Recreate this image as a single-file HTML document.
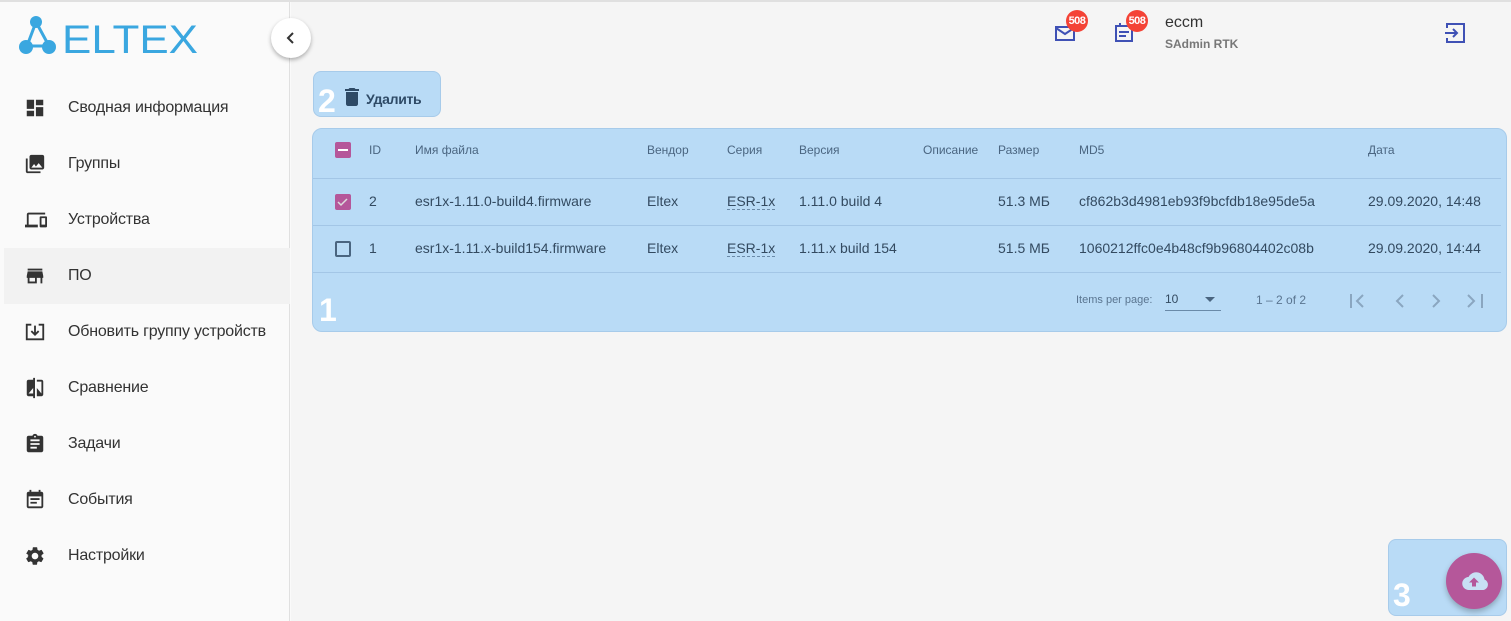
<!DOCTYPE html>
<html><head><meta charset="utf-8"><style>
*{box-sizing:border-box;margin:0;padding:0}
body{width:1511px;height:621px;overflow:hidden;background:#fafafa;font-family:"Liberation Sans",sans-serif;position:relative;color:#333}
.top{position:absolute;left:0;top:0;width:1511px;height:2px;background:#e0e0e0}
.side{position:absolute;left:0;top:2px;width:290px;height:619px;background:#fafafa;border-right:1px solid #e0e0e0}
.main{position:absolute;left:291px;top:2px;width:1220px;height:619px;background:#f5f5f5}
.nav{position:absolute;left:4px;width:286px;height:56px;display:flex;align-items:center;font-size:16px;color:#333}
.nav svg{position:absolute;left:20px}
.nav span{position:absolute;left:64px;letter-spacing:-0.2px}
.abs{position:absolute}
.th{position:absolute;top:143px;font-size:12px;color:#4a6580}
.td{position:absolute;font-size:14px;color:#334a60}
.line{position:absolute;left:313px;width:1188px;height:1px;background:#a3c6e6}
.big{position:absolute;color:#fff;font-weight:bold;font-size:32px}
</style></head><body>
<div class="top"></div>
<div class="side">
<svg class="abs" style="left:18px;top:12px" width="182" height="44" viewBox="0 0 182 44">
<g stroke="#3aa7e0" stroke-width="3"><line x1="18" y1="8" x2="9" y2="32"/><line x1="18" y1="8" x2="31" y2="32"/><line x1="9" y1="32" x2="31" y2="32"/></g>
<g fill="#3aa7e0"><circle cx="18" cy="8" r="6"/><circle cx="8" cy="33" r="7"/><circle cx="31" cy="33" r="7"/></g>
<text x="44" y="39" font-family="Liberation Sans" font-size="40" fill="#3aa7e0" letter-spacing="0" textLength="136" lengthAdjust="spacingAndGlyphs">ELTEX</text>
</svg>
<div class="nav" style="top:78px"><svg width="22" height="22" viewBox="0 0 24 24"><path fill="#333" d="M3 13h8V3H3zm0 8h8v-6H3zm10 0h8V11h-8zm0-18v6h8V3z"/></svg><span>Сводная информация</span></div>
<div class="nav" style="top:134px"><svg width="22" height="22" viewBox="0 0 24 24"><path fill="#333" d="M22 16V4c0-1.1-.9-2-2-2H8c-1.1 0-2 .9-2 2v12c0 1.1.9 2 2 2h12c1.1 0 2-.9 2-2zm-11-4 2 2.7L16 11l4 5H8zM2 6v14c0 1.1.9 2 2 2h14v-2H4V6z"/></svg><span>Группы</span></div>
<div class="nav" style="top:190px"><svg width="24" height="22" viewBox="0 0 24 24"><path fill="#333" d="M4 6h18V4H4c-1.1 0-2 .9-2 2v11H0v3h14v-3H4zm19 2h-6c-.55 0-1 .45-1 1v10c0 .55.45 1 1 1h6c.55 0 1-.45 1-1V9c0-.55-.45-1-1-1zm-1 9h-4v-7h4z"/></svg><span>Устройства</span></div>
<div class="nav" style="top:246px;background:#f2f2f2"><svg width="22" height="22" viewBox="0 0 24 24"><path fill="#333" d="M20 4H4v2h16zm1 10v-2l-1-5H4l-1 5v2h1v6h10v-6h4v6h2v-6zm-9 4H6v-4h6z"/></svg><span>ПО</span></div>
<div class="nav" style="top:302px"><svg width="22" height="22" viewBox="0 0 24 24"><path fill="none" stroke="#333" stroke-width="2" d="M8 4H3v16h18V4h-5M12 5v10M8 11l4 4 4-4"/></svg><span>Обновить группу устройств</span></div>
<div class="nav" style="top:358px"><svg width="22" height="22" viewBox="0 0 24 24"><path fill="#333" d="M10 3H5c-1.1 0-2 .9-2 2v14c0 1.1.9 2 2 2h5v2h2V1h-2zm0 15H5l5-6zm9-15h-5v2h5v13l-5-6v9h5c1.1 0 2-.9 2-2V5c0-1.1-.9-2-2-2z"/></svg><span>Сравнение</span></div>
<div class="nav" style="top:414px"><svg width="22" height="22" viewBox="0 0 24 24"><path fill="#333" d="M19 3h-4.2C14.4 1.8 13.300 1 12 1s-2.4.8-2.8 2H5c-1.1 0-2 .9-2 2v14c0 1.1.9 2 2 2h14c1.1 0 2-.9 2-2V5c0-1.1-.9-2-2-2zm-7 0c.55 0 1 .45 1 1s-.45 1-1 1-1-.45-1-1 .45-1 1-1zm2 14H7v-2h7zm3-4H7v-2h10zm0-4H7V7h10z"/></svg><span>Задачи</span></div>
<div class="nav" style="top:470px"><svg width="22" height="22" viewBox="0 0 24 24"><path fill="#333" d="M19 3h-1V1h-2v2H8V1H6v2H5c-1.1 0-2 .9-2 2v14c0 1.1.9 2 2 2h14c1.1 0 2-.9 2-2V5c0-1.1-.9-2-2-2zm0 16H5V8h14zM7 10h10v2H7zm0 4h7v2H7z"/></svg><span>События</span></div>
<div class="nav" style="top:526px"><svg width="22" height="22" viewBox="0 0 24 24"><path fill="#333" d="M19.14 12.94c.04-.3.06-.61.06-.94s-.02-.64-.07-.94l2.03-1.58a.49.49 0 0 0 .12-.61l-1.920-3.32a.49.49 0 0 0-.59-.22l-2.39.96c-.5-.38-1.03-.7-1.62-.94l-.36-2.54a.48.48 0 0 0-.48-.41h-3.84c-.24 0-.43.17-.47.41l-.36 2.54c-.59.24-1.13.57-1.62.94l-2.39-.96a.48.48 0 0 0-.59.22L2.74 8.87c-.12.21-.8.47.12.61l2.03 1.58c-.05.3-.9.63-.9.94s.2.64.7.94l-2.03 1.58a.49.49 0 0 0-.12.61l1.92 3.32c.12.22.37.29.59.22l2.39-.96c.5.38 1.030.7 1.62.94l.36 2.54c.5.24.24.41.48.41h3.84c.24 0 .44-.17.47-.41l.36-2.54c.59-.24 1.13-.56 1.62-.94l2.39.96c.22.08.47 0 .59-.22l1.92-3.32c.12-.22.07-.47-.12-.61zM12 15.6c-1.98 0-3.6-1.62-3.6-3.6s1.62-3.6 3.6-3.6 3.6 1.62 3.6 3.6-1.62 3.6-3.6 3.6z"/></svg><span>Настройки</span></div>
</div>
<div class="main"></div>
<div class="abs" style="left:271px;top:18px;width:40px;height:40px;border-radius:50%;background:#fff;box-shadow:0 2px 4px rgba(0,0,0,.3);text-align:center"><svg width="12" height="12" viewBox="0 0 12 12" style="margin-top:14px"><path d="M8 1 3 6l5 5" fill="none" stroke="#333" stroke-width="2"/></svg></div>
<svg class="abs" style="left:1055px;top:24px" width="22" height="18" viewBox="0 0 22 18"><rect x="1" y="3" width="18" height="13" fill="none" stroke="#3f51b5" stroke-width="2"/><path d="M1 4l9 6 9-6" fill="none" stroke="#3f51b5" stroke-width="2"/></svg>
<div class="abs" style="left:1066px;top:10px;width:22px;height:22px;border-radius:50%;background:#f44336;color:#fff;font-size:11px;font-weight:bold;text-align:center;line-height:22px;letter-spacing:-0.5px">508</div>
<svg class="abs" style="left:1115px;top:21px" width="20" height="22" viewBox="0 0 20 22"><rect x="1" y="5" width="16" height="15" fill="none" stroke="#3f51b5" stroke-width="2"/><rect x="4" y="10" width="10" height="2" fill="#3f51b5"/><rect x="4" y="14" width="7" height="2" fill="#3f51b5"/><rect x="4" y="2" width="2" height="4" fill="#3f51b5"/></svg>
<div class="abs" style="left:1126px;top:10px;width:22px;height:22px;border-radius:50%;background:#f44336;color:#fff;font-size:11px;font-weight:bold;text-align:center;line-height:22px;letter-spacing:-0.5px">508</div>
<div class="abs" style="left:1165px;top:14px;font-size:16px;color:#333">eccm</div>
<div class="abs" style="left:1165px;top:37px;font-size:12px;color:#777;font-weight:bold">SAdmin RTK</div>
<svg class="abs" style="left:1444px;top:22px" width="22" height="22" viewBox="0 0 22 22"><path d="M3 6V2h17v18H3v-4" fill="none" stroke="#3f51b5" stroke-width="2"/><path d="M1 11h12M9 7l4 4-4 4" fill="none" stroke="#3f51b5" stroke-width="2"/></svg>
<div class="abs" style="left:313px;top:71px;width:128px;height:46px;background:#b9dbf6;border-radius:8px;border:1px solid #a7cbea"></div>
<svg class="abs" style="left:345px;top:88px" width="14" height="18" viewBox="0 0 14 18"><path fill="#2e4a66" d="M1 16c0 1.1.9 2 2 2h8c1.1 0 2-.9 2-2V4H1zM14 1h-3.5l-1-1h-5l-1 1H0v2h14z"/></svg>
<div class="abs" style="left:366px;top:91px;font-size:14px;font-weight:bold;color:#2e4a66;letter-spacing:-0.3px">Удалить</div>
<div class="big" style="left:318px;top:83px">2</div>
<div class="abs" style="left:312px;top:128px;width:1195px;height:204px;background:#b9dbf6;border-radius:10px;border:1px solid #a7cbea"></div>
<div class="abs" style="left:335px;top:142px;width:16px;height:16px;background:#b5579a;border-radius:2px"><div style="margin:7px 3px;height:2px;background:#fff"></div></div>
<div class="th" style="left:369px">ID</div><div class="th" style="left:415px">Имя файла</div><div class="th" style="left:647px">Вендор</div><div class="th" style="left:727px">Серия</div><div class="th" style="left:799px">Версия</div><div class="th" style="left:923px">Описание</div><div class="th" style="left:998px">Размер</div><div class="th" style="left:1079px">MD5</div><div class="th" style="left:1368px">Дата</div>
<div class="line" style="top:178px"></div><div class="line" style="top:225px"></div><div class="line" style="top:272px"></div>
<div class="abs" style="left:335px;top:194px;width:16px;height:16px;background:#b5579a;border-radius:2px"><svg width="16" height="16"><path d="M3 8l3 3 6-6" fill="none" stroke="#ddd" stroke-width="1.5"/></svg></div>
<div class="td" style="top:193px;left:369px">2</div><div class="td" style="top:193px;left:415px">esr1x-1.11.0-build4.firmware</div><div class="td" style="top:193px;left:647px">Eltex</div><div class="td" style="top:193px;left:727px;border-bottom:1px dashed #6a8aa8">ESR-1x</div><div class="td" style="top:193px;left:799px">1.11.0 build 4</div><div class="td" style="top:193px;left:998px">51.3 МБ</div><div class="td" style="top:193px;left:1079px">cf862b3d4981eb93f9bcfdb18e95de5a</div><div class="td" style="top:193px;left:1368px">29.09.2020, 14:48</div>
<div class="abs" style="left:335px;top:241px;width:16px;height:16px;border:2px solid #4a6580;border-radius:2px"></div>
<div class="td" style="top:240px;left:369px">1</div><div class="td" style="top:240px;left:415px">esr1x-1.11.x-build154.firmware</div><div class="td" style="top:240px;left:647px">Eltex</div><div class="td" style="top:240px;left:727px;border-bottom:1px dashed #6a8aa8">ESR-1x</div><div class="td" style="top:240px;left:799px">1.11.x build 154</div><div class="td" style="top:240px;left:998px">51.5 МБ</div><div class="td" style="top:240px;left:1079px">1060212ffc0e4b48cf9b96804402c08b</div><div class="td" style="top:240px;left:1368px">29.09.2020, 14:44</div>
<div class="abs" style="left:1076px;top:294px;font-size:11px;color:#5a7590">Items per page:</div>
<div class="abs" style="left:1165px;top:292px;width:56px;height:19px;border-bottom:1px solid #6a8aa8;font-size:12px;color:#334a60">10<span style="position:absolute;left:40px;top:5px;border:5px solid transparent;border-top:5px solid #4a6580"></span></div>
<div class="abs" style="left:1256px;top:293px;font-size:12px;color:#5a7590">1 – 2 of 2</div>
<svg class="abs" style="left:1348px;top:292px" width="140" height="18" viewBox="0 0 140 18"><g fill="none" stroke="#8aa6c0" stroke-width="2"><path d="M3 2v14M15 3l-6 6 6 6M55 3l-6 6 6 6M85 3l6 6-6 6M120 3l6 6-6 6M134 2v14"/></g></svg>
<div class="big" style="left:319px;top:292px">1</div>
<div class="abs" style="left:1388px;top:539px;width:119px;height:77px;background:#b9dbf6;border-radius:8px;border:1px solid #a7cbea"></div>
<div class="abs" style="left:1446px;top:553px;width:56px;height:56px;border-radius:50%;background:#b5579a;box-shadow:0 3px 6px rgba(0,0,0,.25)"><svg width="56" height="56" viewBox="0 0 56 56"><path fill="#c8e0f4" d="M38.5 26.5a8.5 8.5 0 0 0-16-2.5A6.5 6.5 0 0 0 23 37h14.5a5.5 5.5 0 0 0 1-10.5z"/><path fill="#b5579a" d="M28 24.5l-5 5h3v4h4v-4h3z"/></svg></div>
<div class="big" style="left:1393px;top:577px">3</div>
</body></html>
